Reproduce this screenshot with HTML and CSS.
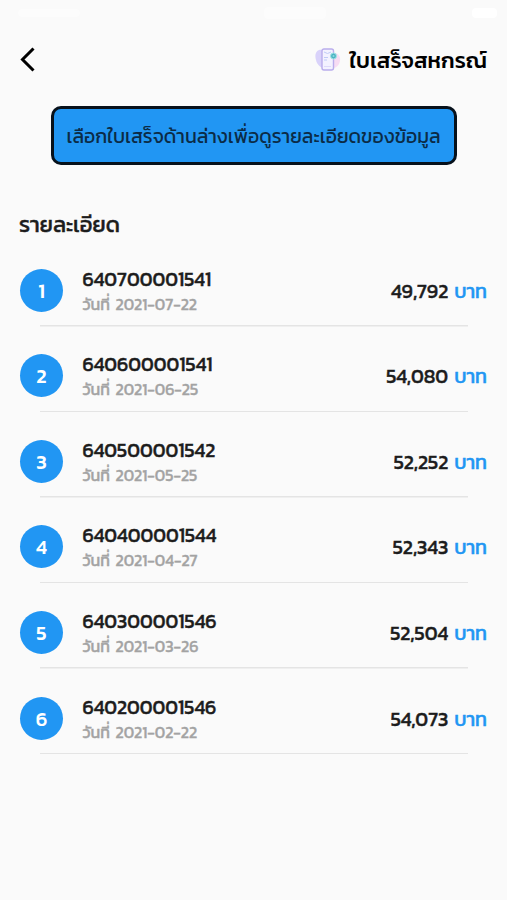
FILE: index.html
```html
<!DOCTYPE html>
<html lang="th">
<head>
<meta charset="utf-8">
<meta name="viewport" content="width=device-width, initial-scale=1">
<title>ใบเสร็จสหกรณ์</title>
<link rel="stylesheet" href="styles.css">
</head>
<body>
<div class="status"><i class="mark"></i><i class="mark mark-wide"></i><i class="mark mark-battery"></i></div>
<header class="header">
  <svg class="back" width="16" height="26" viewBox="0 0 16 26"><path d="M14.500 1.500 3.500 12.500l11 11" fill="none" stroke="#000" stroke-width="3"/></svg>
  <div class="brand">
    <svg class="receipt" width="26" height="24" viewBox="0 0 26 24">
      <path d="M7 2C2 1-1 6 1 12c1 5 6 9 9 8z" fill="#d9d2fa"/>
      <path d="M17 5c6-1 9 4 8 8-1 5-5 8-9 7z" fill="#f7dcf3"/>
      <rect x="7" y="1" width="11.500" height="21" rx="2" fill="#f3f2ff" stroke="#b9adec" stroke-width="1.400"/>
      <path d="M9 4l3.500 1.500L16 4M9 9.500h4M9 12h3" fill="none" stroke="#c0cbf7"/>
      <path d="M9 18.500h7" stroke="#dedafa"/>
      <circle cx="18.500" cy="8" r="3" fill="#4db3c4" stroke="#a5e6e6"/>
      <circle cx="18.500" cy="8" r="1" fill="#8fdcdd"/>
    </svg>
    <h1 class="title">ใบเสร็จสหกรณ์</h1>
  </div>
</header>
<main>
  <div class="notice">เลือกใบเสร็จด้านล่างเพื่อดูรายละเอียดของข้อมูล</div>
  <h2 class="subtitle">รายละเอียด</h2>
  <ul class="list">
    <li class="row"><span class="num">1</span><div class="info"><b class="code">640700001541</b><span class="date">วันที่ 2021-07-22</span></div><div class="amount">49,792 <span class="unit">บาท</span></div></li>
    <li class="row"><span class="num">2</span><div class="info"><b class="code">640600001541</b><span class="date">วันที่ 2021-06-25</span></div><div class="amount">54,080 <span class="unit">บาท</span></div></li>
    <li class="row"><span class="num">3</span><div class="info"><b class="code">640500001542</b><span class="date">วันที่ 2021-05-25</span></div><div class="amount">52,252 <span class="unit">บาท</span></div></li>
    <li class="row"><span class="num">4</span><div class="info"><b class="code">640400001544</b><span class="date">วันที่ 2021-04-27</span></div><div class="amount">52,343 <span class="unit">บาท</span></div></li>
    <li class="row"><span class="num">5</span><div class="info"><b class="code">640300001546</b><span class="date">วันที่ 2021-03-26</span></div><div class="amount">52,504 <span class="unit">บาท</span></div></li>
    <li class="row"><span class="num">6</span><div class="info"><b class="code">640200001546</b><span class="date">วันที่ 2021-02-22</span></div><div class="amount">54,073 <span class="unit">บาท</span></div></li>
  </ul>
</main>
</body>
</html>
```
FILE: styles.css
```css
* { box-sizing: border-box; }

body {
  margin: 0;
  min-height: 900px;
  background: #fafafa;
  color: #1c1c1c;
  font-family: Kanit, "Noto Sans Thai", "Noto Sans", sans-serif;
}

.status {
  display: flex;
  align-items: center;
  justify-content: space-between;
  height: 24px;
  padding: 2px 10px 0 18px;
}

.mark {
  width: 62px;
  height: 8px;
  border-radius: 4px;
  background: #fcfcfc;
}

.mark-wide {
  height: 12px;
  margin-left: 38px;
}

.mark-battery {
  width: 25px;
  height: 10px;
  background: #fff;
}

.header {
  display: flex;
  align-items: center;
  justify-content: space-between;
  height: 82px;
  padding: 0 20px 11px 19px;
}

.back, .receipt { display: block; }

.brand {
  display: flex;
  align-items: center;
  gap: 9px;
}

.title {
  margin: 0;
  padding-top: 2px;
  color: #000;
  font-size: 22px;
  font-weight: 500;
  line-height: 34px;
}

.notice {
  display: flex;
  align-items: center;
  justify-content: center;
  width: 406px;
  height: 59px;
  margin: 0 auto;
  padding-top: 1px;
  border: 3px solid #07111b;
  border-radius: 10px;
  background: #2196f3;
  color: #0b2b46;
  font-size: 19.500px;
  white-space: nowrap;
}

.subtitle {
  margin: 43px 20px 0 19px;
  font-size: 22px;
  font-weight: 400;
  line-height: 34px;
  -webkit-text-stroke: 0.5px currentColor;
}

.list {
  margin: -1px 0 0;
  padding: 0;
  list-style: none;
}

.row {
  display: flex;
  align-items: center;
  height: 85.560px;
  padding: 13px 20px 0 20px;
  background: linear-gradient(#e4e4e4, #e4e4e4) 39.500px 100% / 428px 1.500px no-repeat;
}

.num {
  display: flex;
  align-items: center;
  justify-content: center;
  width: 43px;
  height: 43px;
  padding-top: 1px;
  border-radius: 50%;
  background: #2196f3;
  color: #fff;
  font-size: 20px;
  font-weight: 500;
}

.info {
  display: flex;
  flex: 1;
  flex-direction: column;
  margin-left: 19.500px;
  padding-top: 1px;
}

.code {
  font-size: 19.600px;
  font-weight: 400;
  line-height: 26px;
  -webkit-text-stroke: 0.5px currentColor;
}

.date {
  color: #a3a3a3;
  font-size: 16px;
  line-height: 24px;
  word-spacing: 2px;
  -webkit-text-stroke: 0.4px currentColor;
}

.amount {
  padding-top: 1px;
  font-size: 19.700px;
  font-weight: 400;
  word-spacing: 1.500px;
  -webkit-text-stroke: 0.5px currentColor;
}

.unit { color: #2196f3; }
```
